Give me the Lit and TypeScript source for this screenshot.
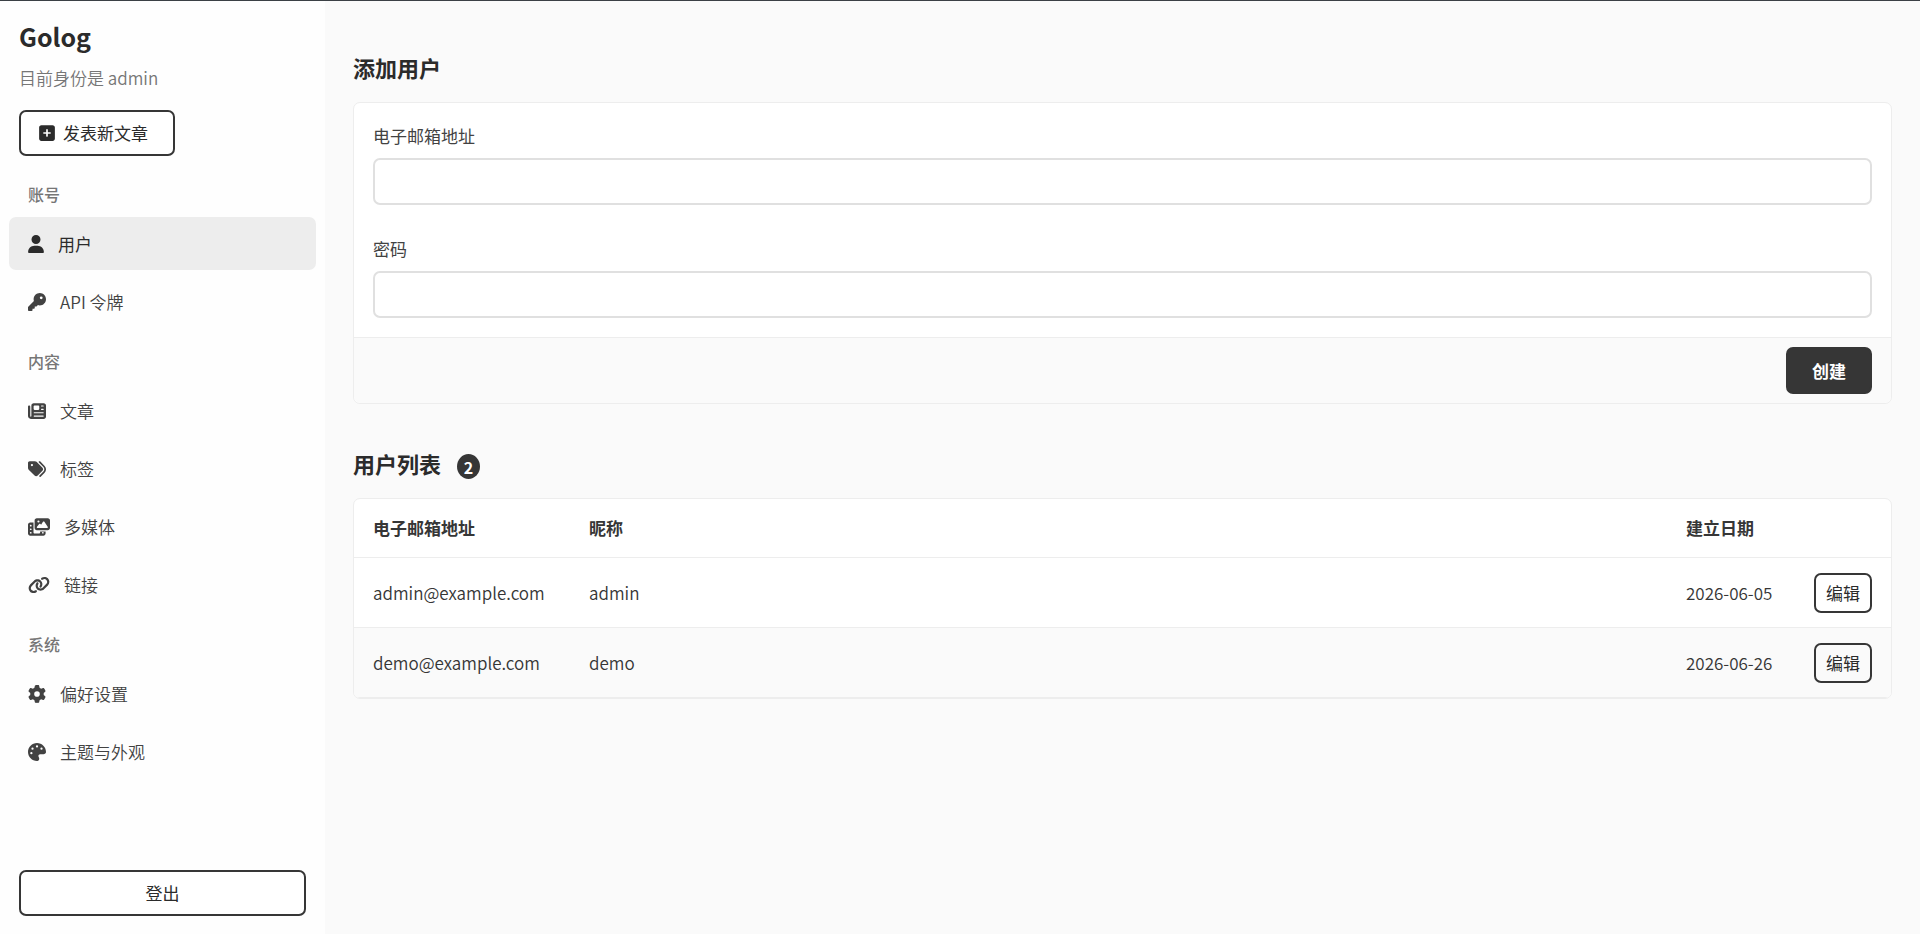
import { LitElement, html, css } from "lit";
import { customElement } from "lit/decorators.js";
import { classMap } from "lit/directives/class-map.js";

interface Icon {
  box: number;
  width: number;
  path: string;
}

interface NavItem {
  label: string;
  icon: Icon;
  active?: boolean;
}

const plusIcon: Icon = {
  box: 448,
  width: 16,
  path: "M64 32C28.7 32 0 60.7 0 96V416c0 35.3 28.7 64 64 64H384c35.3 0 64-28.7 64-64V96c0-35.3-28.7-64-64-64H64zM200 344V280H136c-13.3 0-24-10.7-24-24s10.7-24 24-24h64V168c0-13.3 10.7-24 24-24s24 10.7 24 24v64h64c13.3 0 24 10.7 24 24s-10.7 24-24 24H248v64c0 13.3-10.7 24-24 24s-24-10.7-24-24z",
};

const userIcon: Icon = {
  box: 448,
  width: 16,
  path: "M224 256A128 128 0 1 0 224 0a128 128 0 1 0 0 256zm-45.7 48C79.8 304 0 383.8 0 482.3C0 498.7 13.3 512 29.7 512l388.6 0c16.4 0 29.7-13.3 29.7-29.7C448 383.8 368.2 304 269.7 304l-91.4 0z",
};

const keyIcon: Icon = {
  box: 512,
  width: 18,
  path: "M336 352c97.2 0 176-78.8 176-176S433.2 0 336 0S160 78.8 160 176c0 18.7 2.9 36.8 8.3 53.7L7 391c-4.5 4.5-7 10.6-7 17v80c0 13.3 10.7 24 24 24h80c13.3 0 24-10.7 24-24V448h40c13.3 0 24-10.7 24-24V384h40c6.4 0 12.5-2.5 17-7l33.3-33.3c16.9 5.4 35 8.3 53.7 8.3zM376 96a40 40 0 1 1 0 80 40 40 0 1 1 0-80z",
};

const newspaperIcon: Icon = {
  box: 512,
  width: 18,
  path: "M96 96c0-35.3 28.7-64 64-64H448c35.3 0 64 28.7 64 64V416c0 35.3-28.7 64-64 64H80c-44.2 0-80-35.8-80-80V128c0-17.7 14.3-32 32-32s32 14.3 32 32V400c0 8.8 7.2 16 16 16s16-7.2 16-16V96zm64 24v80c0 13.3 10.7 24 24 24H296c13.3 0 24-10.7 24-24V120c0-13.3-10.7-24-24-24H184c-13.3 0-24 10.7-24 24zm208-8c0 8.8 7.2 16 16 16h48c8.8 0 16-7.2 16-16s-7.2-16-16-16H384c-8.8 0-16 7.2-16 16zm0 96c0 8.8 7.2 16 16 16h48c8.8 0 16-7.2 16-16s-7.2-16-16-16H384c-8.8 0-16 7.2-16 16zM160 304c0 8.8 7.2 16 16 16H432c8.8 0 16-7.2 16-16s-7.2-16-16-16H176c-8.8 0-16 7.2-16 16zm0 96c0 8.8 7.2 16 16 16H432c8.8 0 16-7.2 16-16s-7.2-16-16-16H176c-8.8 0-16 7.2-16 16z",
};

const tagsIcon: Icon = {
  box: 512,
  width: 18,
  path: "M345 39.1L472.8 168.4c52.4 53 52.4 138.2 0 191.2L360.8 472.9c-9.3 9.4-24.5 9.5-33.9 .2s-9.5-24.5-.2-33.9L438.6 325.9c33.9-34.3 33.9-89.4 0-123.7L310.9 72.9c-9.3-9.4-9.2-24.6 .2-33.9s24.6-9.2 33.9 .2zM0 229.5V80C0 53.5 21.5 32 48 32H197.5c17 0 33.3 6.7 45.3 18.7l168 168c25 25 25 65.5 0 90.5L277.3 442.7c-25 25-65.5 25-90.5 0l-168-168C6.7 262.7 0 246.5 0 229.5zM144 144a32 32 0 1 0 -64 0 32 32 0 1 0 64 0z",
};

const mediaIcon: Icon = {
  box: 640,
  width: 22,
  path: "M256 0H576c35.3 0 64 28.7 64 64V288c0 35.3-28.7 64-64 64H256c-35.3 0-64-28.7-64-64V64c0-35.3 28.7-64 64-64zM476 106.7C471.5 100 464 96 456 96s-15.5 4-20 10.7l-56 84L362.7 169c-4.6-5.7-11.5-9-18.7-9s-14.2 3.3-18.7 9l-64 80c-5.8 7.2-6.9 17.1-2.9 25.4s12.4 13.6 21.6 13.6h80 48H552c8.9 0 17-4.9 21.2-12.7s3.7-17.3-1.2-24.6l-96-144zM336 96a32 32 0 1 0 -64 0 32 32 0 1 0 64 0zM64 128h96V384v32c0 17.7 14.3 32 32 32H320c17.7 0 32-14.3 32-32V384H512v64c0 35.3-28.7 64-64 64H64c-35.3 0-64-28.7-64-64V192c0-35.3 28.7-64 64-64zm8 64c-8.8 0-16 7.2-16 16v16c0 8.8 7.2 16 16 16H88c8.8 0 16-7.2 16-16V208c0-8.8-7.2-16-16-16H72zm0 104c-8.8 0-16 7.2-16 16v16c0 8.8 7.2 16 16 16H88c8.8 0 16-7.2 16-16V312c0-8.8-7.2-16-16-16H72zm0 104c-8.8 0-16 7.2-16 16v16c0 8.8 7.2 16 16 16H88c8.8 0 16-7.2 16-16V416c0-8.8-7.2-16-16-16H72zm336 16v16c0 8.8 7.2 16 16 16h16c8.8 0 16-7.2 16-16V416c0-8.8-7.2-16-16-16H424c-8.8 0-16 7.2-16 16z",
};

const linkIcon: Icon = {
  box: 640,
  width: 22,
  path: "M579.8 267.7c56.5-56.5 56.5-148 0-204.5c-50-50-128.8-56.5-186.3-15.4l-1.6 1.1c-14.4 10.3-17.7 30.3-7.4 44.6s30.3 17.7 44.6 7.4l1.6-1.1c32.1-22.9 76-19.3 103.8 8.6c31.5 31.5 31.5 82.5 0 114L422.3 334.8c-31.5 31.5-82.5 31.5-114 0c-27.9-27.9-31.5-71.8-8.6-103.8l1.1-1.6c10.3-14.4 6.9-34.4-7.4-44.6s-34.4-6.9-44.6 7.4l-1.1 1.6C206.5 251.2 213 330 263 380c56.5 56.5 148 56.5 204.5 0L579.8 267.7zM60.2 244.3c-56.5 56.5-56.5 148 0 204.5c50 50 128.8 56.5 186.3 15.4l1.6-1.1c14.4-10.3 17.7-30.3 7.4-44.6s-30.3-17.7-44.6-7.4l-1.6 1.1c-32.1 22.9-76 19.3-103.8-8.6C74 372 74 321 105.5 289.5L217.7 177.2c31.5-31.5 82.5-31.5 114 0c27.9 27.9 31.5 71.8 8.6 103.9l-1.1 1.6c-10.3 14.4-6.9 34.4 7.4 44.6s34.4 6.9 44.6-7.4l1.1-1.6C433.5 260.8 427 182 377 132c-56.5-56.5-148-56.5-204.5 0L60.2 244.3z",
};

const gearIcon: Icon = {
  box: 512,
  width: 18,
  path: "M495.9 166.6c3.2 8.7 .5 18.4-6.4 24.6l-43.3 39.4c1.1 8.3 1.7 16.8 1.7 25.4s-.6 17.1-1.7 25.4l43.3 39.4c6.9 6.2 9.6 15.9 6.4 24.6c-4.4 11.9-9.7 23.3-15.8 34.3l-4.7 8.1c-6.6 11-14 21.4-22.1 31.2c-5.9 7.2-15.7 9.6-24.5 6.8l-55.7-17.7c-13.4 10.3-28.2 18.9-44 25.4l-12.5 57.1c-2 9.1-9 16.3-18.2 17.8c-13.8 2.3-28 3.5-42.5 3.5s-28.7-1.2-42.5-3.5c-9.2-1.5-16.2-8.7-18.2-17.8l-12.5-57.1c-15.8-6.5-30.6-15.1-44-25.4L83.1 425.9c-8.8 2.8-18.6 .3-24.5-6.8c-8.1-9.8-15.5-20.2-22.1-31.2l-4.7-8.1c-6.1-11-11.4-22.4-15.8-34.3c-3.2-8.7-.5-18.4 6.4-24.6l43.3-39.4C64.6 273.1 64 264.6 64 256s.6-17.1 1.7-25.4L22.4 191.2c-6.9-6.2-9.6-15.9-6.4-24.6c4.4-11.9 9.7-23.3 15.8-34.3l4.7-8.1c6.6-11 14-21.4 22.1-31.2c5.9-7.2 15.7-9.6 24.5-6.8l55.7 17.7c13.4-10.3 28.2-18.9 44-25.4l12.5-57.1c2-9.1 9-16.3 18.2-17.8C227.3 1.2 241.5 0 256 0s28.7 1.2 42.5 3.5c9.2 1.5 16.2 8.7 18.2 17.8l12.5 57.1c15.8 6.5 30.6 15.1 44 25.4l55.7-17.7c8.8-2.8 18.6-.3 24.5 6.8c8.1 9.8 15.5 20.2 22.1 31.2l4.7 8.1c6.1 11 11.4 22.4 15.8 34.3zM256 336a80 80 0 1 0 0-160 80 80 0 1 0 0 160z",
};

const paletteIcon: Icon = {
  box: 512,
  width: 18,
  path: "M512 256c0 .9 0 1.8 0 2.7c-.4 36.5-33.6 61.3-70.1 61.3H344c-26.5 0-48 21.5-48 48c0 3.4 .4 6.7 1 9.9c2.1 10.2 6.5 20 10.8 29.9c6.1 13.8 12.1 27.5 12.1 42c0 31.8-21.6 60.7-53.4 62c-3.5 .1-7 .2-10.6 .2C114.6 512 0 397.4 0 256S114.6 0 256 0S512 114.6 512 256zM128 288a32 32 0 1 0 -64 0 32 32 0 1 0 64 0zm0-96a32 32 0 1 0 0-64 32 32 0 1 0 0 64zM288 96a32 32 0 1 0 -64 0 32 32 0 1 0 64 0zm96 96a32 32 0 1 0 0-64 32 32 0 1 0 0 64z",
};

const sections: { title: string; items: NavItem[] }[] = [
  {
    title: "账号",
    items: [
      { label: "用户", icon: userIcon, active: true },
      { label: "API 令牌", icon: keyIcon },
    ],
  },
  {
    title: "内容",
    items: [
      { label: "文章", icon: newspaperIcon },
      { label: "标签", icon: tagsIcon },
      { label: "多媒体", icon: mediaIcon },
      { label: "链接", icon: linkIcon },
    ],
  },
  {
    title: "系统",
    items: [
      { label: "偏好设置", icon: gearIcon },
      { label: "主题与外观", icon: paletteIcon },
    ],
  },
];

const users = [
  { email: "admin@example.com", nickname: "admin", created: "2026-06-05" },
  { email: "demo@example.com", nickname: "demo", created: "2026-06-26" },
];

const drawIcon = (icon: Icon) => html`<svg
  width=${icon.width}
  height="18"
  viewBox="0 0 ${icon.box} 512"
  fill="currentColor"
  aria-hidden="true"
>
  <path d=${icon.path}></path>
</svg>`;

const base = css`
  *,
  *::before,
  *::after {
    box-sizing: border-box;
  }
  h1,
  h2,
  p,
  ul {
    margin: 0;
    padding: 0;
  }
  ul {
    list-style: none;
  }
  a {
    color: inherit;
    text-decoration: none;
  }
  svg {
    display: block;
    flex: none;
  }
  .button {
    display: inline-flex;
    align-items: center;
    justify-content: center;
    gap: 8px;
    height: 46px;
    padding: 0 18px;
    border: 2px solid #363636;
    border-radius: 7px;
    background: #fff;
    color: #2b2b2b;
    font: inherit;
    font-weight: 400;
    cursor: pointer;
  }
`;

@customElement("side-bar")
export class SideBar extends LitElement {
  static styles = [
    base,
    css`
      :host {
        display: flex;
        flex-direction: column;
        background: #fefefe;
      }
      .head {
        display: flex;
        flex-direction: column;
        align-items: flex-start;
        padding: 15px 19px 0;
      }
      .brand {
        font-size: 25px;
        line-height: 40px;
        font-weight: 700;
        color: #2b2b2b;
      }
      .identity {
        padding: 9px 0 19px;
        line-height: 26px;
        color: #767676;
      }
      .compose {
        padding-right: 25px;
      }
      .nav {
        display: flex;
        flex-direction: column;
        padding: 20px 9px;
      }
      .title {
        padding: 5px 19px 10px;
        font-size: 16px;
        line-height: 26px;
        font-weight: 500;
        color: #767676;
      }
      .list {
        display: flex;
        flex-direction: column;
        gap: 5px;
        padding-bottom: 15px;
      }
      .item {
        display: flex;
        align-items: center;
        gap: 14px;
        height: 53px;
        padding: 0 19px;
        border-radius: 7px;
        color: #424242;
      }
      .active {
        background: #ededed;
        color: #2b2b2b;
        font-weight: 400;
      }
      .foot {
        display: flex;
        flex-direction: column;
        margin-top: auto;
        padding: 0 19px 18px;
      }
    `,
  ];

  render() {
    return html`
      <header class="head">
        <h1 class="brand">Golog</h1>
        <p class="identity">目前身份是 admin</p>
        <button class="button compose" type="button">
          ${drawIcon(plusIcon)}<span>发表新文章</span>
        </button>
      </header>
      <nav class="nav">
        ${sections.map(
          (section) => html`
            <p class="title">${section.title}</p>
            <ul class="list">
              ${section.items.map(
                (item) => html`<li>
                  <a class=${classMap({ item: true, active: !!item.active })} href="#"
                    >${drawIcon(item.icon)}<span>${item.label}</span></a
                  >
                </li>`,
              )}
            </ul>
          `,
        )}
      </nav>
      <footer class="foot">
        <button class="button" type="button">登出</button>
      </footer>
    `;
  }
}

@customElement("user-form")
export class UserForm extends LitElement {
  static styles = [
    base,
    css`
      :host {
        display: block;
      }
      .card {
        border: 1px solid #ededed;
        border-radius: 7px;
        background: #fff;
      }
      .fields {
        display: flex;
        flex-direction: column;
        gap: 30px;
        padding: 19px;
      }
      .field {
        display: flex;
        flex-direction: column;
        gap: 8px;
      }
      .label {
        line-height: 28px;
        font-weight: 400;
        color: #424242;
      }
      .input {
        width: 100%;
        height: 47px;
        padding: 0 12px;
        border: 2px solid #e0e0e0;
        border-radius: 7px;
        background: #fff;
        color: #363636;
        font: inherit;
      }
      .actions {
        display: flex;
        justify-content: flex-end;
        padding: 9px 19px;
        border-top: 1px solid #ededed;
        border-radius: 0 0 7px 7px;
        background: #fafafa;
      }
      .primary {
        height: 47px;
        padding: 0 24px;
        background: #363636;
        color: #fff;
        font-weight: 700;
      }
    `,
  ];

  render() {
    return html`
      <form class="card" @submit=${(e: Event) => e.preventDefault()}>
        <div class="fields">
          <div class="field">
            <label class="label" for="email">电子邮箱地址</label>
            <input class="input" id="email" type="email" autocomplete="off" />
          </div>
          <div class="field">
            <label class="label" for="password">密码</label>
            <input class="input" id="password" type="password" autocomplete="new-password" />
          </div>
        </div>
        <div class="actions">
          <button class="button primary" type="submit">创建</button>
        </div>
      </form>
    `;
  }
}

@customElement("user-table")
export class UserTable extends LitElement {
  static styles = [
    base,
    css`
      :host {
        display: block;
        overflow: hidden;
        border: 1px solid #ededed;
        border-radius: 7px;
        background: #fff;
      }
      .table {
        width: 100%;
        border-collapse: separate;
        border-spacing: 0;
        line-height: 28px;
        color: #363636;
      }
      .table th,
      .table td {
        height: 70px;
        padding: 0 19px;
        border-bottom: 1px solid #ededed;
        text-align: left;
        white-space: nowrap;
      }
      .table th {
        height: 59px;
        font-weight: 700;
      }
      .table .email {
        min-width: 216px;
      }
      .table .date {
        min-width: 128px;
      }
      .table tbody tr:nth-child(even) {
        background: #fafafa;
      }
      .table .wide {
        width: 100%;
      }
      .edit {
        height: 40px;
        padding: 0 10px;
        background: transparent;
      }
    `,
  ];

  render() {
    return html`
      <table class="table">
        <thead>
          <tr>
            <th class="email" scope="col">电子邮箱地址</th>
            <th class="wide" scope="col">昵称</th>
            <th class="date" scope="col">建立日期</th>
            <th></th>
          </tr>
        </thead>
        <tbody>
          ${users.map(
            (user) => html`<tr>
              <td>${user.email}</td>
              <td>${user.nickname}</td>
              <td>${user.created}</td>
              <td><button class="button edit" type="button">编辑</button></td>
            </tr>`,
          )}
        </tbody>
      </table>
    `;
  }
}

@customElement("app-root")
export class AppRoot extends LitElement {
  static styles = [
    base,
    css`
      :host {
        box-sizing: border-box;
        display: grid;
        grid-template-columns: 325px minmax(0, 1fr);
        min-height: 100vh;
        border-top: 1px solid #3b4045;
        background: #fafafa;
        color: #363636;
        font-family: "Noto Sans CJK SC", sans-serif;
        font-size: 17px;
        font-weight: 350;
        line-height: 26px;
      }
      .main {
        display: flex;
        flex-direction: column;
        gap: 43px;
        padding: 50px 28px;
      }
      .block {
        display: flex;
        flex-direction: column;
        gap: 19px;
      }
      .heading {
        display: flex;
        align-items: flex-end;
        gap: 16px;
        font-size: 22px;
        line-height: 32px;
        font-weight: 600;
        color: #2b2b2b;
      }
      .badge {
        display: flex;
        align-items: center;
        justify-content: center;
        width: 23px;
        height: 25px;
        border-radius: 50%;
        background: #363636;
        color: #fff;
        font-size: 16px;
        font-weight: 700;
      }
    `,
  ];

  render() {
    return html`
      <side-bar></side-bar>
      <main class="main">
        <section class="block">
          <h2 class="heading">添加用户</h2>
          <user-form></user-form>
        </section>
        <section class="block">
          <h2 class="heading">用户列表 <span class="badge">${users.length}</span></h2>
          <user-table></user-table>
        </section>
      </main>
    `;
  }
}
